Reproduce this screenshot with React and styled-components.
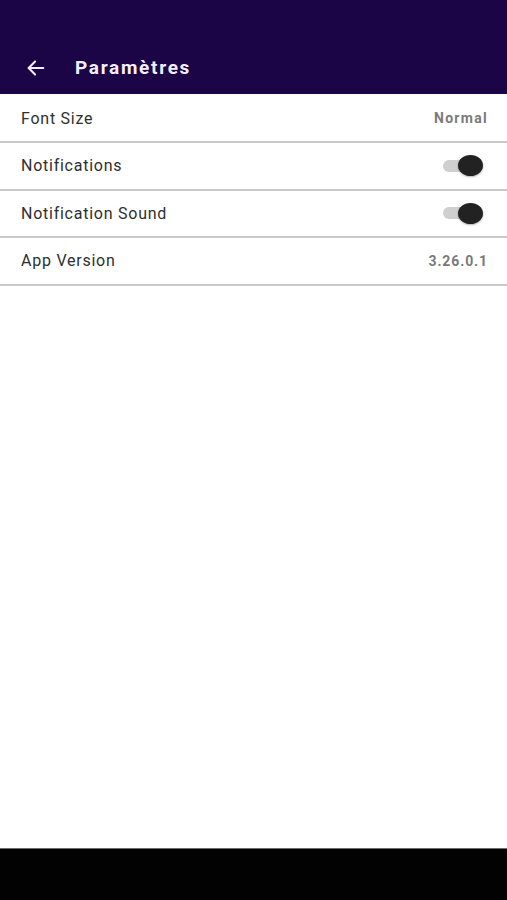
import React, { useState } from 'react';
import styled, { createGlobalStyle } from 'styled-components';

const GlobalStyle = createGlobalStyle`
  html, body {
    margin: 0;
    padding: 0;
    background: #ffffff;
    font-family: Roboto, "Noto Sans", Arial, sans-serif;
  }
  #root {
    min-height: 100vh;
  }
`;

const Screen = styled.div`
  display: flex;
  flex-direction: column;
  min-height: 100vh;
  background: #ffffff;
`;

const Header = styled.header`
  height: 94px;
  background: #1b0546;
  display: flex;
  align-items: flex-end;
  padding: 0 0 14px 24px;
  box-sizing: border-box;
  gap: 27px;
`;

const BackButton = styled.button`
  background: none;
  border: none;
  padding: 0;
  width: 24px;
  height: 24px;
  display: flex;
  align-items: center;
  justify-content: center;
  cursor: pointer;
`;

const Title = styled.h1`
  margin: 0;
  color: #f4eefc;
  font-size: 19px;
  font-weight: 700;
  letter-spacing: 1.7px;
  line-height: 24px;
`;

const List = styled.div`
  flex: 1;
  display: flex;
  flex-direction: column;
  padding-top: 1.5px;
`;

const Row = styled.div`
  height: 45.5px;
  border-bottom: 2px solid #c9c9c9;
  display: flex;
  align-items: center;
  justify-content: space-between;
  padding: 0 20px 0 21px;
`;

const Label = styled.span`
  font-size: 16px;
  color: #2f2f2f;
  letter-spacing: 0.75px;
`;

const Value = styled.span`
  font-size: 14px;
  font-weight: 700;
  color: #7a7a7a;
  letter-spacing: ${p => (p.tight ? '0.9px' : '1.3px')};
  margin-right: -1px;
`;

const Toggle = styled.button`
  position: relative;
  width: 42px;
  height: 24px;
  background: none;
  border: none;
  padding: 0;
  margin-right: 4px;
  cursor: pointer;
`;

const Track = styled.span`
  position: absolute;
  left: 2px;
  top: 6px;
  width: 34px;
  height: 12px;
  border-radius: 6px;
  background: ${p => (p.on ? '#cfcfcf' : '#b8b8b8')};
`;

const Thumb = styled.span`
  position: absolute;
  top: 1.5px;
  left: ${p => (p.on ? '17px' : '0px')};
  width: 25px;
  height: 21px;
  border-radius: 50%;
  background: ${p => (p.on ? '#222222' : '#f1f1f1')};
  box-shadow: 0 1px 2px rgba(0, 0, 0, 0.3);
`;

const NavBar = styled.div`
  height: 52px;
  background: #020202;
  border-top: 1px solid #6d6d6d;
  box-sizing: border-box;
`;

const Switch = ({ on, onChange }) => (
  <Toggle onClick={() => onChange(!on)} aria-pressed={on}>
    <Track on={on} />
    <Thumb on={on} />
  </Toggle>
);

const App = () => {
  const [notifications, setNotifications] = useState(true);
  const [sound, setSound] = useState(true);

  return (
    <Screen>
      <GlobalStyle />
      <Header>
        <BackButton aria-label="Retour">
          <svg width="22" height="22" viewBox="0 0 24 24" fill="none" stroke="#f4eefc" strokeWidth="2.2" strokeLinecap="round" strokeLinejoin="round">
            <path d="M20 12H4" />
            <path d="M11 5l-7 7 7 7" />
          </svg>
        </BackButton>
        <Title>Paramètres</Title>
      </Header>

      <List>
        <Row>
          <Label>Font Size</Label>
          <Value>Normal</Value>
        </Row>
        <Row>
          <Label>Notifications</Label>
          <Switch on={notifications} onChange={setNotifications} />
        </Row>
        <Row>
          <Label>Notification Sound</Label>
          <Switch on={sound} onChange={setSound} />
        </Row>
        <Row>
          <Label>App Version</Label>
          <Value tight>3.26.0.1</Value>
        </Row>
      </List>

      <NavBar />
    </Screen>
  );
};

export default App;
